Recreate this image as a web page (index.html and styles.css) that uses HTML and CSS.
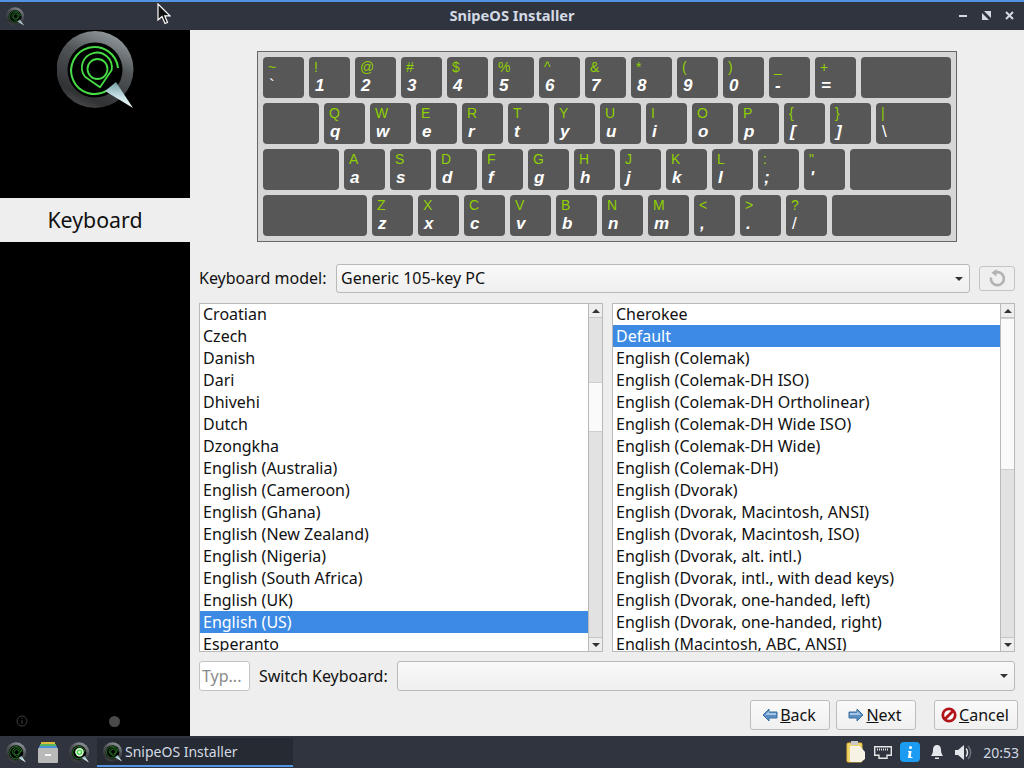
FILE: index.html
```html
<!DOCTYPE html>
<html lang="en">
<head>
<meta charset="utf-8">
<title>SnipeOS Installer</title>
<link rel="stylesheet" href="styles.css">
</head>
<body>
<svg class="defs" width="0" height="0" aria-hidden="true">
  <defs>
    <linearGradient id="ring" x1="0.75" y1="0" x2="0.3" y2="1">
      <stop offset="0" stop-color="#969ea1"/>
      <stop offset="0.4" stop-color="#505457"/>
      <stop offset="0.85" stop-color="#303234"/>
      <stop offset="1" stop-color="#4a4c4e"/>
    </linearGradient>
    <linearGradient id="spike" x1="0.5" y1="0" x2="0.4" y2="1">
      <stop offset="0" stop-color="#6f9aa0"/>
      <stop offset="0.55" stop-color="#c7e2e6"/>
      <stop offset="1" stop-color="#ffffff"/>
    </linearGradient>
    <symbol id="logo" viewBox="0 0 80 80">
      <circle cx="38" cy="39.500" r="38.500" fill="url(#ring)"/>
      <circle cx="38" cy="40" r="27.500" fill="#000"/>
      <path d="M61 38 A23.500 23.500 0 1 0 50 60.500" fill="none" stroke="#45dc45" stroke-width="2"/>
      <path d="M43 57.300 L28 46.700 A15 15 0 1 1 54.700 40 Z" fill="none" stroke="#45dc45" stroke-width="1.800" stroke-linejoin="round"/>
      <circle cx="40.500" cy="39" r="10" fill="none" stroke="#45dc45" stroke-width="1.800"/>
      <path d="M48 61 L59 52 L76 78 Z" fill="url(#spike)"/>
    </symbol>
    <symbol id="arrow" viewBox="0 0 16 14">
      <path d="M1 7 L7 1 V4 H15 V10 H7 V13 Z" fill="#5b8fc4" stroke="#3f6d9e" stroke-width="1"/>
      <path d="M3 7 L7 3 V5 H14 V7 Z" fill="#a5c6e6"/>
    </symbol>
  </defs>
</svg>

<div class="app">
  <header class="titlebar">
    <svg class="title-logo"><use href="#logo"/></svg>
    <span class="title-text">SnipeOS Installer</span>
    <div class="win-controls">
      <svg class="win-btn" viewBox="0 0 10 10"><rect x="0" y="4" width="8" height="2" fill="#d3dae3"/></svg>
      <svg class="win-btn" viewBox="0 0 10 10"><path d="M2 0H9V7ZM0 2L7 9H0Z" fill="#d3dae3"/></svg>
      <svg class="win-btn" viewBox="0 0 10 10"><path d="M1 1L8 8M8 1L1 8" stroke="#d3dae3" stroke-width="2"/></svg>
    </div>
  </header>

  <div class="window">
    <aside class="sidebar">
      <div class="logo-box"><svg class="logo"><use href="#logo"/></svg></div>
      <div class="step">Keyboard</div>
      <div class="side-fill"></div>
      <div class="side-foot">
        <svg class="side-info" viewBox="0 0 12 12"><circle cx="6" cy="6" r="5" fill="none" stroke="#3c3c3c"/><path d="M6 3V4M6 5V9" stroke="#3c3c3c"/></svg>
        <span class="side-dot"></span>
      </div>
    </aside>

    <main class="content">
      <div class="keyboard-wrap">
        <div class="keyboard">
          <div class="kb-row">
            <div class="key"><span class="up">~</span><span class="low plain">`</span></div>
            <div class="key"><span class="up">!</span><span class="low">1</span></div>
            <div class="key"><span class="up">@</span><span class="low">2</span></div>
            <div class="key"><span class="up">#</span><span class="low">3</span></div>
            <div class="key"><span class="up">$</span><span class="low">4</span></div>
            <div class="key"><span class="up">%</span><span class="low">5</span></div>
            <div class="key"><span class="up">^</span><span class="low">6</span></div>
            <div class="key"><span class="up">&amp;</span><span class="low">7</span></div>
            <div class="key"><span class="up">*</span><span class="low">8</span></div>
            <div class="key"><span class="up">(</span><span class="low">9</span></div>
            <div class="key"><span class="up">)</span><span class="low">0</span></div>
            <div class="key"><span class="up">_</span><span class="low">-</span></div>
            <div class="key"><span class="up">+</span><span class="low">=</span></div>
            <div class="key grow"></div>
          </div>
          <div class="kb-row">
            <div class="key w-tab"></div>
            <div class="key"><span class="up">Q</span><span class="low">q</span></div>
            <div class="key"><span class="up">W</span><span class="low">w</span></div>
            <div class="key"><span class="up">E</span><span class="low">e</span></div>
            <div class="key"><span class="up">R</span><span class="low">r</span></div>
            <div class="key"><span class="up">T</span><span class="low">t</span></div>
            <div class="key"><span class="up">Y</span><span class="low">y</span></div>
            <div class="key"><span class="up">U</span><span class="low">u</span></div>
            <div class="key"><span class="up">I</span><span class="low">i</span></div>
            <div class="key"><span class="up">O</span><span class="low">o</span></div>
            <div class="key"><span class="up">P</span><span class="low">p</span></div>
            <div class="key"><span class="up">{</span><span class="low">[</span></div>
            <div class="key"><span class="up">}</span><span class="low">]</span></div>
            <div class="key grow"><span class="up">|</span><span class="low plain">\</span></div>
          </div>
          <div class="kb-row">
            <div class="key w-caps"></div>
            <div class="key"><span class="up">A</span><span class="low">a</span></div>
            <div class="key"><span class="up">S</span><span class="low">s</span></div>
            <div class="key"><span class="up">D</span><span class="low">d</span></div>
            <div class="key"><span class="up">F</span><span class="low">f</span></div>
            <div class="key"><span class="up">G</span><span class="low">g</span></div>
            <div class="key"><span class="up">H</span><span class="low">h</span></div>
            <div class="key"><span class="up">J</span><span class="low">j</span></div>
            <div class="key"><span class="up">K</span><span class="low">k</span></div>
            <div class="key"><span class="up">L</span><span class="low">l</span></div>
            <div class="key"><span class="up">:</span><span class="low">;</span></div>
            <div class="key"><span class="up">"</span><span class="low">'</span></div>
            <div class="key grow"></div>
          </div>
          <div class="kb-row">
            <div class="key w-shift"></div>
            <div class="key"><span class="up">Z</span><span class="low">z</span></div>
            <div class="key"><span class="up">X</span><span class="low">x</span></div>
            <div class="key"><span class="up">C</span><span class="low">c</span></div>
            <div class="key"><span class="up">V</span><span class="low">v</span></div>
            <div class="key"><span class="up">B</span><span class="low">b</span></div>
            <div class="key"><span class="up">N</span><span class="low">n</span></div>
            <div class="key"><span class="up">M</span><span class="low">m</span></div>
            <div class="key"><span class="up">&lt;</span><span class="low">,</span></div>
            <div class="key"><span class="up">&gt;</span><span class="low">.</span></div>
            <div class="key"><span class="up">?</span><span class="low plain">/</span></div>
            <div class="key grow"></div>
          </div>
        </div>
      </div>

      <div class="model-row">
        <label class="label">Keyboard model:</label>
        <div class="combo model-combo"><span>Generic 105-key PC</span><i class="combo-arrow"></i></div>
        <button class="reset-btn" type="button">
          <svg viewBox="0 0 20 20" width="20" height="20"><path d="M8 3.600 A6.500 6.500 0 1 1 4 8.500" fill="none" stroke="#b2b2b2" stroke-width="2.600"/><path d="M9.500 0V7.500L4.500 3.700Z" fill="#b2b2b2"/></svg>
        </button>
      </div>

      <div class="lists">
        <div class="listbox">
          <ul class="items">
            <li>Croatian</li><li>Czech</li><li>Danish</li><li>Dari</li><li>Dhivehi</li><li>Dutch</li><li>Dzongkha</li>
            <li>English (Australia)</li><li>English (Cameroon)</li><li>English (Ghana)</li><li>English (New Zealand)</li>
            <li>English (Nigeria)</li><li>English (South Africa)</li><li>English (UK)</li><li class="sel">English (US)</li><li>Esperanto</li>
          </ul>
          <div class="scrollbar">
            <div class="sb-btn"><i class="tri-up"></i></div>
            <div class="sb-track"><div class="sb-thumb thumb-left"></div></div>
            <div class="sb-btn"><i class="tri-down"></i></div>
          </div>
        </div>
        <div class="listbox">
          <ul class="items">
            <li>Cherokee</li><li class="sel">Default</li><li>English (Colemak)</li><li>English (Colemak-DH ISO)</li>
            <li>English (Colemak-DH Ortholinear)</li><li>English (Colemak-DH Wide ISO)</li><li>English (Colemak-DH Wide)</li>
            <li>English (Colemak-DH)</li><li>English (Dvorak)</li><li>English (Dvorak, Macintosh, ANSI)</li>
            <li>English (Dvorak, Macintosh, ISO)</li><li>English (Dvorak, alt. intl.)</li><li>English (Dvorak, intl., with dead keys)</li>
            <li>English (Dvorak, one-handed, left)</li><li>English (Dvorak, one-handed, right)</li><li>English (Macintosh, ABC, ANSI)</li>
          </ul>
          <div class="scrollbar">
            <div class="sb-btn"><i class="tri-up"></i></div>
            <div class="sb-track"><div class="sb-thumb thumb-right"></div></div>
            <div class="sb-btn"><i class="tri-down"></i></div>
          </div>
        </div>
      </div>

      <div class="switch-row">
        <div class="type-input">Typ...</div>
        <label class="label">Switch Keyboard:</label>
        <div class="combo switch-combo"><i class="combo-arrow"></i></div>
      </div>

      <div class="button-row">
        <button class="btn btn-back" type="button"><svg class="btn-icon" width="16" height="14"><use href="#arrow"/></svg><span><u>B</u>ack</span></button>
        <button class="btn btn-next" type="button"><svg class="btn-icon flip" width="16" height="14"><use href="#arrow"/></svg><span><u>N</u>ext</span></button>
        <button class="btn btn-cancel" type="button">
          <svg class="btn-icon" viewBox="0 0 16 16" width="16" height="16"><circle cx="8" cy="8" r="6.200" fill="#fff" stroke="#b3141a" stroke-width="2.800"/><path d="M3.500 12.500L12.500 3.500" stroke="#b3141a" stroke-width="2.800"/></svg>
          <span><u>C</u>ancel</span>
        </button>
      </div>
    </main>
  </div>

  <footer class="taskbar">
    <svg class="tb-logo"><use href="#logo"/></svg>
    <svg class="tb-files" viewBox="0 0 20 21">
      <rect x="3" y="0" width="14" height="3" fill="#e0b93c"/>
      <rect x="2" y="2" width="16" height="3" fill="#5bb55f"/>
      <rect x="1" y="4" width="18" height="3" fill="#4a90d9"/>
      <rect x="0" y="6" width="20" height="15" rx="1" fill="#b9b9b9"/>
      <rect x="7" y="12" width="6" height="2" fill="#f4f4f4"/>
    </svg>
    <svg class="tb-logo tb-bright" viewBox="0 0 80 80">
      <use href="#logo" width="80" height="80"/>
      <circle cx="40" cy="39" r="16" fill="#dff5df"/>
      <circle cx="40" cy="39" r="8" fill="none" stroke="#3ed43e" stroke-width="5"/>
    </svg>
    <div class="task">
      <svg class="task-logo"><use href="#logo"/></svg>
      <span>SnipeOS Installer</span>
    </div>
    <div class="tray">
      <svg class="tray-notes" viewBox="0 0 20 22">
        <rect x="1" y="2" width="15" height="19" rx="1" fill="#f0d56a" stroke="#e0b93c"/>
        <rect x="5" y="0" width="7" height="4" fill="#c9c9c9"/>
        <path d="M4 5H14L19 11V18L15 21H4Z" fill="#f7f3e4"/>
      </svg>
      <svg class="tray-net" viewBox="0 0 18 13">
        <path d="M0.700 0.700H17.300V9.300H13V12.300H5V9.300H0.700Z" fill="none" stroke="#e6e6e6" stroke-width="1.400"/>
        <path d="M3 3.500H15" stroke="#e6e6e6" stroke-dasharray="1 1" stroke-width="2"/>
      </svg>
      <svg class="tray-info" viewBox="0 0 20 20">
        <rect width="20" height="20" rx="4" fill="#1b9cf2"/>
        <circle cx="10.500" cy="5.500" r="1.500" fill="#fff"/>
        <path d="M8 9H11.500L10.800 15H12.500V16H8L8.800 10H8Z" fill="#fff"/>
      </svg>
      <svg class="tray-bell" viewBox="0 0 14 16">
        <path d="M7 1C4 1 3 3.500 3 6C3 9 2 10.500 1 12H13C12 10.500 11 9 11 6C11 3.500 10 1 7 1Z" fill="#e3e6ea"/>
        <path d="M5 13.500H9V15H5Z" fill="#e3e6ea"/>
      </svg>
      <svg class="tray-vol" viewBox="0 0 17 15">
        <path d="M0 5H3L9 0V15L3 10H0Z" fill="#e3e6ea"/>
        <path d="M11 3.500C13 5.500 13 9.500 11 11.500" fill="none" stroke="#e3e6ea" stroke-width="1.500"/>
        <path d="M13 1C16.500 4.500 16.500 10.500 13 14" fill="none" stroke="#6d727b" stroke-width="1.500"/>
      </svg>
      <span class="clock">20:53</span>
    </div>
  </footer>

  <svg class="cursor" viewBox="0 0 14 22" width="14" height="22">
    <path d="M1 1V17L5 13.500L8 20.500L10.500 19.500L7.800 12.800H13Z" fill="#111" stroke="#fff" stroke-width="1.200"/>
  </svg>
</div>
</body>
</html>
```

FILE: styles.css
```css
* { box-sizing: border-box; }
html, body { margin: 0; padding: 0; height: 100%; overflow: hidden; }
body { font-family: "Noto Sans", sans-serif; font-size: 16px; color: #111; background: #eee; }
.defs { display: block; height: 0; width: 0; }
svg { display: block; flex: none; }

.app { position: relative; width: 1024px; height: 768px; display: flex; flex-direction: column; }

/* Title bar */
.titlebar { height: 30px; background: #2f343f; border-top: 2px solid #5294e2; display: flex; align-items: center; position: relative; padding-left: 6px; }
.title-logo { width: 19px; height: 19px; opacity: .85; }
.title-text { position: absolute; left: 0; right: 0; margin-top: -2px; text-align: center; font-weight: 700; font-size: 14.67px; color: #d3dae3; pointer-events: none; }
.win-controls { margin-left: auto; display: flex; gap: 13px; padding-right: 9px; }
.win-btn { width: 10px; height: 10px; }

/* Window */
.window { flex: 1; display: flex; min-height: 0; }
.sidebar { width: 190px; background: #000; display: flex; flex-direction: column; }
.logo-box { height: 168px; padding-left: 57px; }
.logo { width: 80px; height: 80px; }
.step { height: 44px; background: #eee; color: #111; font-size: 21.33px; padding-bottom: 2px; display: flex; align-items: center; justify-content: center; }
.side-fill { flex: 1; }
.side-foot { height: 30px; display: flex; align-items: flex-start; padding: 9px 0 0 16px; gap: 81px; }
.side-info { width: 12px; height: 12px; }
.side-dot { width: 11px; height: 11px; border-radius: 50%; background: #4a4a4a; margin-top: 1px; }

/* Content */
.content { flex: 1; min-width: 0; padding: 0 6px 0 9px; display: flex; flex-direction: column; }
.keyboard-wrap { padding: 21px 0 0 58px; height: 234px; }
.keyboard { width: 700px; height: 191px; background: #d6d6d6; border: 1px solid #666; padding: 5px; display: flex; flex-direction: column; gap: 5px; }
.kb-row { display: flex; gap: 5px; height: 41px; }
.key { width: 41px; height: 41px; flex: none; background: #575757; border-radius: 4px; display: flex; flex-direction: column; padding: 2px 0 0 5px; font-family: "Liberation Sans", Arial, sans-serif; }
.key.grow { flex: 1; }
.w-tab { width: 56px; }
.w-caps { width: 76px; }
.w-shift { width: 104px; }
.up { font-size: 14px; line-height: 16px; color: #8fd000; }
.low { font-size: 17px; line-height: 19px; margin-top: 1px; padding-left: 1px; font-weight: 700; font-style: italic; color: #fff; }
.low.plain { font-weight: 400; font-style: normal; }

/* Model row */
.model-row { display: flex; align-items: center; height: 29px; }
.label { white-space: nowrap; }
.model-row .label { margin-bottom: 2px; }
.combo { height: 29px; background: linear-gradient(#f9f9f9, #efefef); border: 1px solid #b9b9b9; border-radius: 3px; display: flex; align-items: center; padding-left: 4px; position: relative; }
.model-combo { width: 634px; margin-left: 10px; padding-left: 3.500px; padding-bottom: 2px; }
.combo-arrow { position: absolute; right: 6px; top: 50%; margin-top: -2px; width: 0; height: 0; border-left: 4px solid transparent; border-right: 4px solid transparent; border-top: 4px solid #333; }
.reset-btn { width: 36px; height: 25px; margin-left: 9px; padding: 0; background: #efefef; border: 1px solid #c4c4c4; border-radius: 3px; display: flex; align-items: center; justify-content: center; }

/* Lists */
.lists { display: flex; gap: 9px; margin-top: 10px; height: 349px; }
.listbox { width: 404px; height: 349px; background: #fff; border: 1px solid #b9b9b9; border-right: 0; display: flex; overflow: hidden; }
.listbox + .listbox { width: 403px; }
.items { flex: 1; min-width: 0; list-style: none; margin: 0; padding: 0; overflow: hidden; }
.items li { height: 22px; line-height: 21px; padding: 1px 0 0 3px; white-space: nowrap; }
.items li.sel { background: #3d8ae5; color: #fff; }
.items li:first-child { height: 21px; padding-top: 0; }
.scrollbar { width: 15px; flex: none; background: #e2e2e2; border: 1px solid #b9b9b9; border-top: 0; border-bottom: 0; display: flex; flex-direction: column; }
.sb-btn { height: 14px; flex: none; background: #eee; border-bottom: 1px solid #c6c6c6; display: flex; align-items: center; justify-content: center; }
.sb-btn:last-child { border-bottom: 0; border-top: 1px solid #c6c6c6; }
.sb-track { flex: 1; position: relative; }
.sb-thumb { position: absolute; left: 0; right: 0; background: #fafafa; border-top: 1px solid #cfcfcf; border-bottom: 1px solid #cfcfcf; }
.thumb-left { top: 64px; height: 50px; }
.thumb-right { top: 0; height: 152px; }
.tri-up { width: 0; height: 0; border-left: 4px solid transparent; border-right: 4px solid transparent; border-bottom: 4px solid #333; }
.tri-down { width: 0; height: 0; border-left: 4px solid transparent; border-right: 4px solid transparent; border-top: 4px solid #333; }

/* Switch row */
.switch-row { display: flex; align-items: center; margin-top: 9px; height: 30px; }
.type-input { width: 51px; height: 30px; background: #fff; border: 1px solid #c4c4c4; border-radius: 3px; color: #8a8a8a; display: flex; align-items: center; padding-left: 2px; overflow: hidden; }
.switch-row .label { margin-left: 9px; }
.switch-combo { width: 618px; height: 30px; margin-left: 9px; }

/* Buttons */
.button-row { display: flex; margin-top: 9px; padding-left: 551px; margin-right: -3px; }
.btn { height: 30px; padding: 0 2px 0 0; font: inherit; color: #111; background: linear-gradient(#fafafa, #f0f0f0); border: 1px solid #bdbdbd; border-radius: 3px; display: flex; align-items: center; justify-content: center; gap: 2px; }
.btn-back { width: 80px; }
.btn-next { width: 80px; margin-left: 6px; }
.btn-cancel { width: 84px; margin-left: 18px; }
.flip { transform: scaleX(-1); }

/* Taskbar */
.taskbar { height: 32px; background: #2f343f; display: flex; align-items: center; padding-left: 6px; color: #d3dae3; font-size: 14px; }
.tb-logo { width: 21px; height: 21px; }
.tb-bright { margin-left: 11px; }
.tb-files { width: 20px; height: 21px; margin-left: 11px; }
.task { width: 196px; height: 29px; margin: 1px 0 0 7px; background: #262a33; border-bottom: 2px solid #5294e2; display: flex; align-items: center; padding-left: 6px; gap: 2px; }
.task-logo { width: 20px; height: 20px; }
.tray { margin-left: auto; display: flex; align-items: center; padding-right: 5px; }
.tray-notes { width: 20px; height: 22px; }
.tray-net { width: 18px; height: 13px; margin-left: 8px; }
.tray-info { width: 20px; height: 20px; margin-left: 8px; }
.tray-bell { width: 14px; height: 16px; margin-left: 10px; }
.tray-vol { width: 17px; height: 15px; margin-left: 11px; }
.clock { margin-left: 11px; }

/* Pointer overlay */
.cursor { position: absolute; left: 157px; top: 3px; }
```
